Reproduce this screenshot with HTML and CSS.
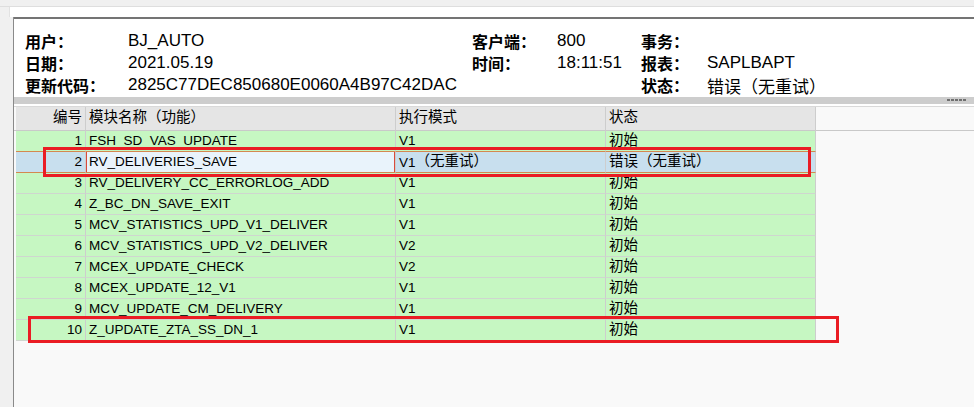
FILE: index.html
```html
<!DOCTYPE html>
<html lang="zh-CN">
<head>
  <meta charset="UTF-8">
  <title>更新记录</title>
  <link rel="stylesheet" href="styles.css">
</head>
<body>
  <div class="topbar"></div>
  <div class="band"></div>
  <div class="shell">
    <div class="gutter"></div>
    <div class="pane">
      <div class="info">
        <span class="lbl">用户：</span><span class="val">BJ_AUTO</span>
        <span class="lbl">客户端：</span><span class="val">800</span>
        <span class="lbl">事务：</span><span class="val"></span>

        <span class="lbl">日期：</span><span class="val">2021.05.19</span>
        <span class="lbl">时间：</span><span class="val">18:11:51</span>
        <span class="lbl">报表：</span><span class="val">SAPLBAPT</span>

        <span class="lbl">更新代码：</span><span class="val">2825C77DEC850680E0060A4B97C42DAC</span>
        <span></span><span></span>
        <span class="lbl">状态：</span><span class="val">错误（无重试）</span>
      </div>

      <div class="splitter"><span class="grip"></span></div>

      <div class="list">
        <table class="grid">
          <thead>
            <tr>
              <th class="num c1"><span class="zh">编号</span></th>
              <th class="c2"><span class="zh">模块名称（功能）</span></th>
              <th class="c3"><span class="zh">执行模式</span></th>
              <th class="c4"><span class="zh">状态</span></th>
            </tr>
          </thead>
          <tbody>
            <tr class="above-sel">
              <td class="num">1</td><td>FSH_SD_VAS_UPDATE</td><td>V1</td><td><span class="zh">初始</span></td>
            </tr>
            <tr class="selected">
              <td class="num">2</td><td class="focus">RV_DELIVERIES_SAVE</td><td>V1<span class="zh">（无重试）</span></td><td><span class="zh">错误（无重试）</span></td>
            </tr>
            <tr>
              <td class="num">3</td><td>RV_DELIVERY_CC_ERRORLOG_ADD</td><td>V1</td><td><span class="zh">初始</span></td>
            </tr>
            <tr>
              <td class="num">4</td><td>Z_BC_DN_SAVE_EXIT</td><td>V1</td><td><span class="zh">初始</span></td>
            </tr>
            <tr>
              <td class="num">5</td><td>MCV_STATISTICS_UPD_V1_DELIVER</td><td>V1</td><td><span class="zh">初始</span></td>
            </tr>
            <tr>
              <td class="num">6</td><td>MCV_STATISTICS_UPD_V2_DELIVER</td><td>V2</td><td><span class="zh">初始</span></td>
            </tr>
            <tr>
              <td class="num">7</td><td>MCEX_UPDATE_CHECK</td><td>V2</td><td><span class="zh">初始</span></td>
            </tr>
            <tr>
              <td class="num">8</td><td>MCEX_UPDATE_12_V1</td><td>V1</td><td><span class="zh">初始</span></td>
            </tr>
            <tr>
              <td class="num">9</td><td>MCV_UPDATE_CM_DELIVERY</td><td>V1</td><td><span class="zh">初始</span></td>
            </tr>
            <tr>
              <td class="num">10</td><td>Z_UPDATE_ZTA_SS_DN_1</td><td>V1</td><td><span class="zh">初始</span></td>
            </tr>
          </tbody>
        </table>
      </div>
    </div>
  </div>

  <div class="mark mark-a"></div>
  <div class="mark mark-b"></div>
</body>
</html>
```

FILE: styles.css
```css
body {
  margin: 0;
  width: 974px;
  height: 407px;
  overflow: hidden;
  background-color: #f0f0f0;
  color: #000;
  font-family: "Liberation Sans", "Noto Sans CJK SC", sans-serif;
  position: relative;
}
.topbar {
  height: 6px;
  background-color: #f0f0f0;
  border-bottom: 1px solid #dedede;
}
.band {
  height: 10px;
  margin-left: 9px;
  background-color: #fff;
  border-left: 1px solid #e2e2e2;
}
.shell {
  display: flex;
  height: 390px;
}
.gutter {
  width: 13px;
  flex: none;
  background-color: #f0f0f0;
  border-right: 1px solid #8a8a8a;
}
.pane {
  flex: 1;
  display: flex;
  flex-direction: column;
  background-color: #f9f9f9;
}

/* header block */
.info {
  height: 67px;
  padding: 11px 0 0 11px;
  background-color: #fff;
  border-top: 2px solid #747474;
  display: grid;
  grid-template-columns: 103px 344px 85px 84px 66px 1fr;
  grid-auto-rows: 22px;
  align-items: center;
}
.lbl {
  font-family: "Noto Sans CJK SC", sans-serif;
  font-weight: bold;
  font-size: 16px;
  white-space: nowrap;
}
.val {
  font-size: 17px;
  white-space: nowrap;
}

.splitter {
  height: 7px;
  background-color: #cdcdcd;
  border-bottom: 2px solid #fff;
  display: flex;
  justify-content: flex-end;
  padding-right: 8px;
}
.grip {
  width: 19px;
  height: 2px;
  margin-top: 2px;
  background: repeating-linear-gradient(to right, #6f6f6f 0 3px, transparent 3px 4px);
}

/* list */
.list {
  flex: 1;
  border-top: 1px solid #d9d9d9;
  padding-left: 2px;
  background: linear-gradient(to bottom, transparent 23px, #c9c9c9 23px, #c9c9c9 24px, transparent 24px);
}
.grid {
  border-collapse: separate;
  border-spacing: 0;
  table-layout: fixed;
  width: 800px;
  font-size: 13.5px;
  line-height: 18px;
}
.grid th,
.grid td {
  box-sizing: border-box;
  padding: 0 3px;
  text-align: left;
  white-space: nowrap;
  border-right: 1px solid #cdcdcd;
  border-bottom: 1px solid #cfd6cf;
}
.grid th {
  height: 24px;
  font-weight: normal;
  background-color: #e5e5e5;
  border-bottom-color: #c9c9c9;
}
.grid td {
  height: 21px;
  background-color: #c6f7c2;
}
.grid .num {
  text-align: right;
}
.c1 { width: 70px; }
.c2 { width: 310px; }
.c3 { width: 210px; }
.c4 { width: 210px; }
.zh {
  font-family: "Noto Sans CJK SC", sans-serif;
  font-size: 14.5px;
  line-height: 1;
  vertical-align: 1px;
}
.grid tr.above-sel td {
  border-bottom-color: #d4884f;
}
.grid tr.selected td {
  background-color: #c8dfee;
  border-bottom-color: #d4884f;
}
.grid tr.selected td.focus {
  background-color: #e9f3fb;
  box-shadow: inset 1px 0 #d94a3c, inset -1px 0 #d94a3c;
}

/* red annotation frames */
.mark {
  position: absolute;
  border: 3px solid #ea1c24;
  box-sizing: border-box;
}
.mark-a {
  left: 43px;
  top: 147px;
  width: 768px;
  height: 30px;
}
.mark-b {
  left: 28px;
  top: 316px;
  width: 811px;
  height: 27px;
}
```
